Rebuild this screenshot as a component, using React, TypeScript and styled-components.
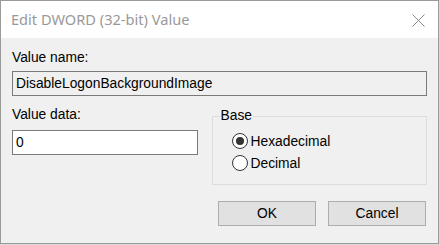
import React from "react";
import styled, { createGlobalStyle } from "styled-components";

const GlobalStyle = createGlobalStyle`
  html, body {
    margin: 0;
    padding: 0;
    background: #d8d8d8;
  }
  * {
    box-sizing: border-box;
  }
`;

const Window = styled.div`
  width: 439px;
  height: 244px;
  border: 1px solid #9a9a9a;
  background: #f0f0f0;
  display: flex;
  flex-direction: column;
  font-family: "Liberation Sans", Arial, sans-serif;
  font-size: 13.8px;
  color: #000;
`;

const TitleBar = styled.div`
  height: 37px;
  flex: none;
  background: #ffffff;
  display: flex;
  align-items: center;
  justify-content: space-between;
  padding: 0 13px 0 10px;
`;

const Title = styled.span`
  font-family: "Noto Sans", sans-serif;
  font-size: 14.6px;
  color: #999999;
  padding-bottom: 1px;
`;

const CloseButton = styled.div`
  width: 13px;
  height: 13px;
  display: flex;
  margin-top: 1px;
`;

const Content = styled.div`
  padding: 12px 11px 0 11px;
  display: flex;
  flex-direction: column;
`;

const Label = styled.div`
  line-height: 16px;
  height: 16px;
`;

const TextBox = styled.div<{ $readOnly?: boolean; $width?: number }>`
  height: 25px;
  width: ${(p) => (p.$width ? `${p.$width}px` : "100%")};
  border: 1px solid #7a7a7a;
  background: ${(p) => (p.$readOnly ? "#f0f0f0" : "#ffffff")};
  padding: 0 3px;
  display: flex;
  align-items: center;
  line-height: 16px;
`;

const NameBox = styled(TextBox)`
  margin-top: 5px;
`;

const DataRow = styled.div`
  display: flex;
  align-items: flex-start;
  margin-top: 11px;
  gap: 14px;
`;

const DataColumn = styled.div`
  width: 186px;
  display: flex;
  flex-direction: column;
  gap: 7px;
`;

const GroupBox = styled.fieldset`
  margin: 1px 0 0 0;
  width: 216px;
  height: 77px;
  border: 1px solid #dcdcdc;
  padding: 6px 0 0 19px;
  min-width: 0;
`;

const Legend = styled.legend`
  padding: 0 1px;
  margin-left: -12px;
  line-height: 16px;
`;

const RadioRow = styled.div`
  height: 22px;
  display: flex;
  align-items: center;
  gap: 3px;
`;

const RadioCircle = styled.span<{ $checked?: boolean }>`
  width: 16px;
  height: 16px;
  border-radius: 50%;
  border: 1px solid #333333;
  background: #ffffff;
  display: flex;
  align-items: center;
  justify-content: center;

  &::after {
    content: "";
    width: 8px;
    height: 8px;
    border-radius: 50%;
    background: ${(p) => (p.$checked ? "#333333" : "transparent")};
  }
`;

const ButtonRow = styled.div`
  display: flex;
  justify-content: flex-end;
  gap: 12px;
  margin-top: 16px;
  padding-right: 1px;
`;

const Button = styled.div`
  width: 98px;
  height: 25px;
  background: #e1e1e1;
  border: 1px solid #adadad;
  display: flex;
  align-items: center;
  justify-content: center;
  line-height: 16px;
`;

export default function App() {
  return (
    <>
      <GlobalStyle />
      <Window>
        <TitleBar>
          <Title>Edit DWORD (32-bit) Value</Title>
          <CloseButton>
            <svg width="13" height="13" viewBox="0 0 13 13">
              <path d="M0.5 0.5 L12.5 12.5 M12.5 0.5 L0.5 12.5" stroke="#8a8a8a" strokeWidth="1" fill="none" />
            </svg>
          </CloseButton>
        </TitleBar>
        <Content>
          <Label>Value name:</Label>
          <NameBox $readOnly>DisableLogonBackgroundImage</NameBox>
          <DataRow>
            <DataColumn>
              <Label>Value data:</Label>
              <TextBox>0</TextBox>
            </DataColumn>
            <GroupBox>
              <Legend>Base</Legend>
              <RadioRow>
                <RadioCircle $checked />
                <span>Hexadecimal</span>
              </RadioRow>
              <RadioRow>
                <RadioCircle />
                <span>Decimal</span>
              </RadioRow>
            </GroupBox>
          </DataRow>
          <ButtonRow>
            <Button>OK</Button>
            <Button>Cancel</Button>
          </ButtonRow>
        </Content>
      </Window>
    </>
  );
}
